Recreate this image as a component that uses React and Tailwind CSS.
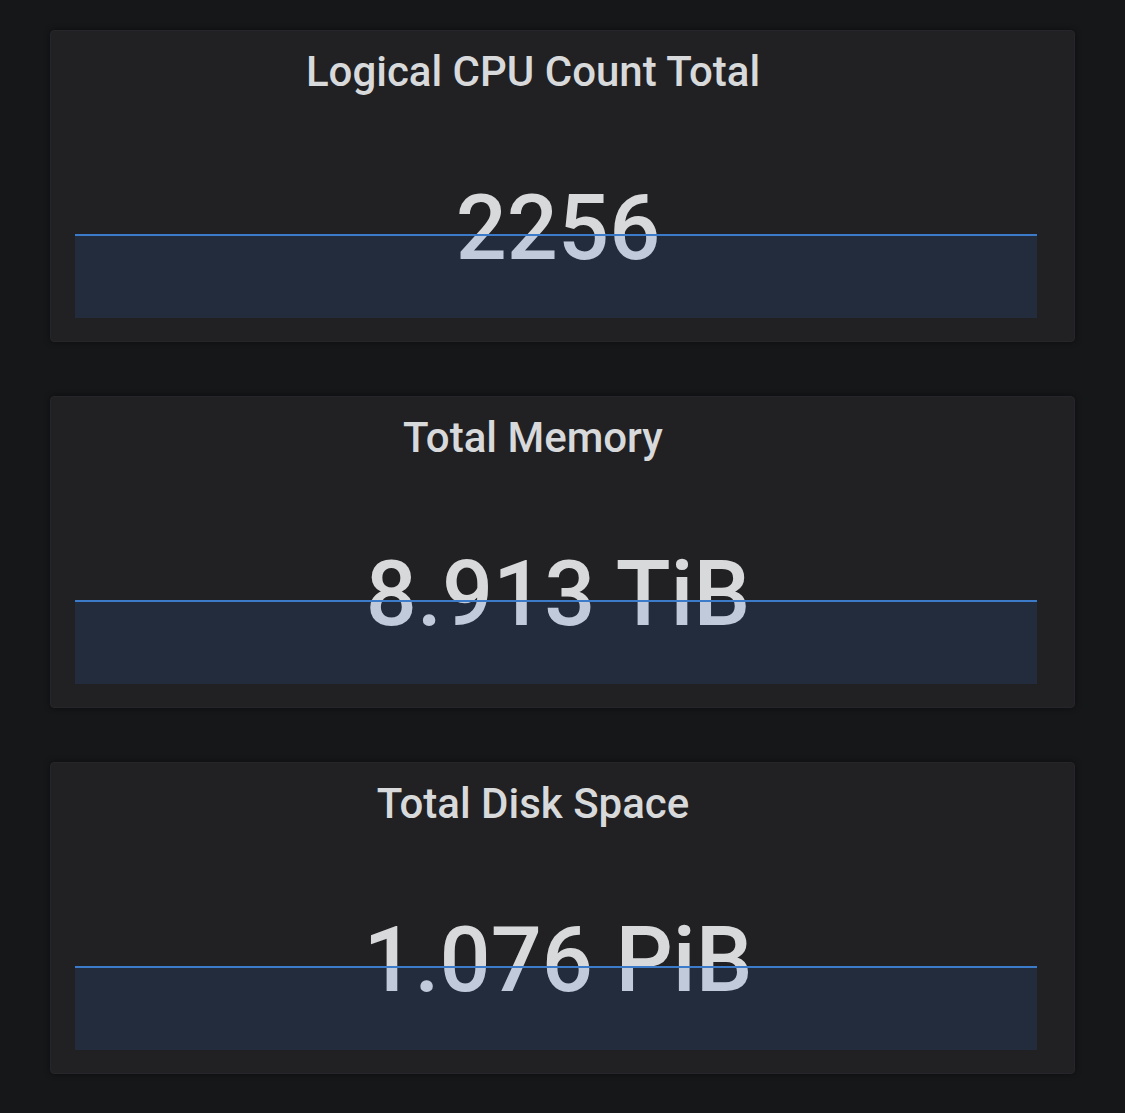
import React from 'react'

const stats = [
    { title: 'Logical CPU Count Total', value: '2256' },
    { title: 'Total Memory', value: '8.913 TiB' },
    { title: 'Total Disk Space', value: '1.076 PiB' },
]

const StatPanel = ({ title, value }) => {
    return (
        <div className="relative h-[312px] rounded-[4px] bg-[#212124] border border-[#26262a] shadow-[0_0_6px_rgba(0,0,0,0.45)] pt-[16px] pl-[24px] pr-[37px] flex flex-col">
            <div className="pr-[46px] text-center text-[42px] leading-[50px] font-medium text-[#d8d9da] whitespace-nowrap">
                {title}
            </div>
            <div className="mt-[79px] pl-[4px] text-center text-[90px] leading-[106px] font-medium text-[#d8d9da] whitespace-nowrap">
                {value}
            </div>
            {/* sparkline sits on top of the value */}
            <div className="absolute left-[24px] right-[37px] bottom-[23px] h-[84px] border-t-2 border-[#3b7bca] bg-[rgba(50,116,217,0.14)]" />
        </div>
    )
}

export default function App() {
    return (
        <div className="min-h-[1113px] w-full bg-[#161719] px-[50px] pt-[30px] pb-[38px] flex flex-col gap-[54px] font-['Roboto',sans-serif]">
            {stats.map((s) => (
                <StatPanel key={s.title} title={s.title} value={s.value} />
            ))}
        </div>
    )
}
